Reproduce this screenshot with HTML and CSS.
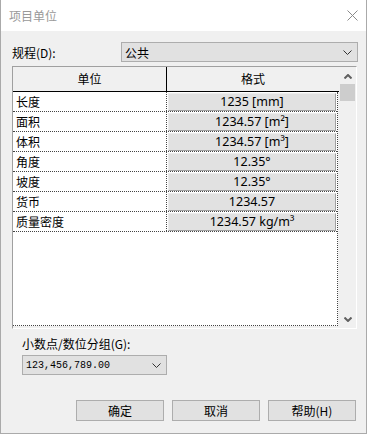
FILE: index.html
```html
<!DOCTYPE html>
<html>
<head>
    <title>项目单位</title>
    <link rel="stylesheet" href="styles.css">
</head>
<body>

<div class="window">
    <div class="titlebar">
        <span class="title">项目单位</span>
        <svg class="close" width="11" height="11" viewBox="0 0 11 11"><path d="M0.5 0.5 L10.5 10.5 M10.5 0.5 L0.5 10.5" stroke="#8a8a8a" stroke-width="1" fill="none"/></svg>
    </div>

    <div class="content">
        <div class="field-row">
            <label class="field-label">规程(D):</label>
            <div class="select discipline">
                <span>公共</span>
                <svg width="9" height="5" viewBox="0 0 9 5"><polyline points="0.5,0.5 4.5,4.5 8.5,0.5" stroke="#333" fill="none"/></svg>
            </div>
        </div>

        <div class="units-frame">
            <div class="units-pane">
                <div class="units-head">
                    <div class="head-cell col-unit">单位</div>
                    <div class="head-cell col-format">格式</div>
                </div>
                <div class="units-body">
                    <div class="unit-row"><div class="cell-name">长度</div><div class="cell-format"><span class="format-btn">1235 [mm]</span></div></div>
                    <div class="unit-row"><div class="cell-name">面积</div><div class="cell-format"><span class="format-btn">1234.57 [m²]</span></div></div>
                    <div class="unit-row"><div class="cell-name">体积</div><div class="cell-format"><span class="format-btn">1234.57 [m³]</span></div></div>
                    <div class="unit-row"><div class="cell-name">角度</div><div class="cell-format"><span class="format-btn">12.35°</span></div></div>
                    <div class="unit-row"><div class="cell-name">坡度</div><div class="cell-format"><span class="format-btn">12.35°</span></div></div>
                    <div class="unit-row"><div class="cell-name">货币</div><div class="cell-format"><span class="format-btn">1234.57</span></div></div>
                    <div class="unit-row"><div class="cell-name">质量密度</div><div class="cell-format"><span class="format-btn">1234.57 kg/m³</span></div></div>
                </div>
            </div>
            <div class="vscroll">
                <svg width="8" height="5" viewBox="0 0 8 5"><polyline points="0.5,4.5 4,1 7.5,4.5" stroke="#606060" stroke-width="2" fill="none"/></svg>
                <div class="thumb"></div>
                <div class="track"></div>
                <svg width="8" height="5" viewBox="0 0 8 5"><polyline points="0.5,0.5 4,4 7.5,0.5" stroke="#606060" stroke-width="2" fill="none"/></svg>
            </div>
        </div>

        <div class="decimal-label">小数点/数位分组(G):</div>
        <div class="select decimal">
            <span class="mono">123,456,789.00</span>
            <svg width="9" height="5" viewBox="0 0 9 5"><polyline points="0.5,0.5 4.5,4.5 8.5,0.5" stroke="#333" fill="none"/></svg>
        </div>

        <div class="actions">
            <button type="button">确定</button>
            <button type="button">取消</button>
            <button type="button">帮助(H)</button>
        </div>
    </div>
</div>

</body>
</html>
```

FILE: styles.css
```css
* { box-sizing: border-box; }

body {
    margin: 0; background-color: #fff; color: #000; font-family: "Noto Sans CJK SC", sans-serif; font-size: 12px;
}

.window {
    width: 367px; height: 434px; border: 1px solid #aaa; border-top: none; display: flex; flex-direction: column; background-color: #f0f0f0;
}

.titlebar { height: 31px; background-color: #fff; display: flex; align-items: center; justify-content: space-between; padding: 0 8px 0 8px;
}

.title { color: #999; font-size: 12px; }

.content { flex: 1; padding: 11px 0 0 11px; }

.field-row { display: flex; align-items: center; height: 20px; }

.field-label { width: 109px; }

.select { background-color: #e1e1e1; border: 1px solid #adadad; display: flex; align-items: center; justify-content: space-between; padding: 0 5px 0 3px;
}

.discipline { width: 237px; height: 20px; }

.units-frame { margin-top: 4px; width: 345px; height: 263px; border: 1px solid; border-color: #a0a0a0 #fff #fff #a0a0a0; display: flex;
}

.units-pane { width: 326px; display: flex; flex-direction: column; }

.units-head { display: flex; height: 25px; border-bottom: 1px solid #000; background-color: #f0f0f0; }

.head-cell { text-align: center; line-height: 24px; }

.col-unit { width: 154px; border-right: 1px solid #000; }

.col-format { flex: 1; }

.units-body { flex: 1; background-color: #fff; border-right: 1px dotted #444; border-bottom: 1px dotted #444; margin-right: 1px; margin-bottom: 2px;
}

.unit-row { display: flex; height: 20px; border-bottom: 1px dotted #444; }

.cell-name { width: 154px; border-right: 1px dotted #444; padding-left: 3px; line-height: 19px; }

.cell-format { flex: 1; padding: 1px 1px 0 1px; }

.format-btn { display: block; height: 18px; background-color: #e1e1e1; border: 1px solid; border-color: #ececec #a0a0a0 #a0a0a0 #ececec; text-align: center; line-height: 16px; font-family: "Noto Sans", "Noto Sans CJK SC", sans-serif; font-size: 12.5px;
}

.vscroll { width: 17px; display: flex; flex-direction: column; align-items: center; padding: 7px 0 6px 0; }

.thumb { width: 15px; height: 17px; margin-top: 5px; background-color: #cdcdcd; }

.track { flex: 1; }

.decimal-label { margin-top: 7px; padding-left: 10px; line-height: 16px; }

.decimal { margin-top: 3px; margin-left: 10px; width: 145px; height: 20px; }

.mono { font-family: "Liberation Mono", monospace; font-size: 10px; }

.actions { display: flex; gap: 8px; padding-left: 64px; margin-top: 25px; }

button { width: 88px; height: 21px; background-color: #e1e1e1; border: 1px solid #adadad; font-family: "Noto Sans CJK SC", sans-serif; font-size: 12px; color: #000; padding: 0;
}
```
